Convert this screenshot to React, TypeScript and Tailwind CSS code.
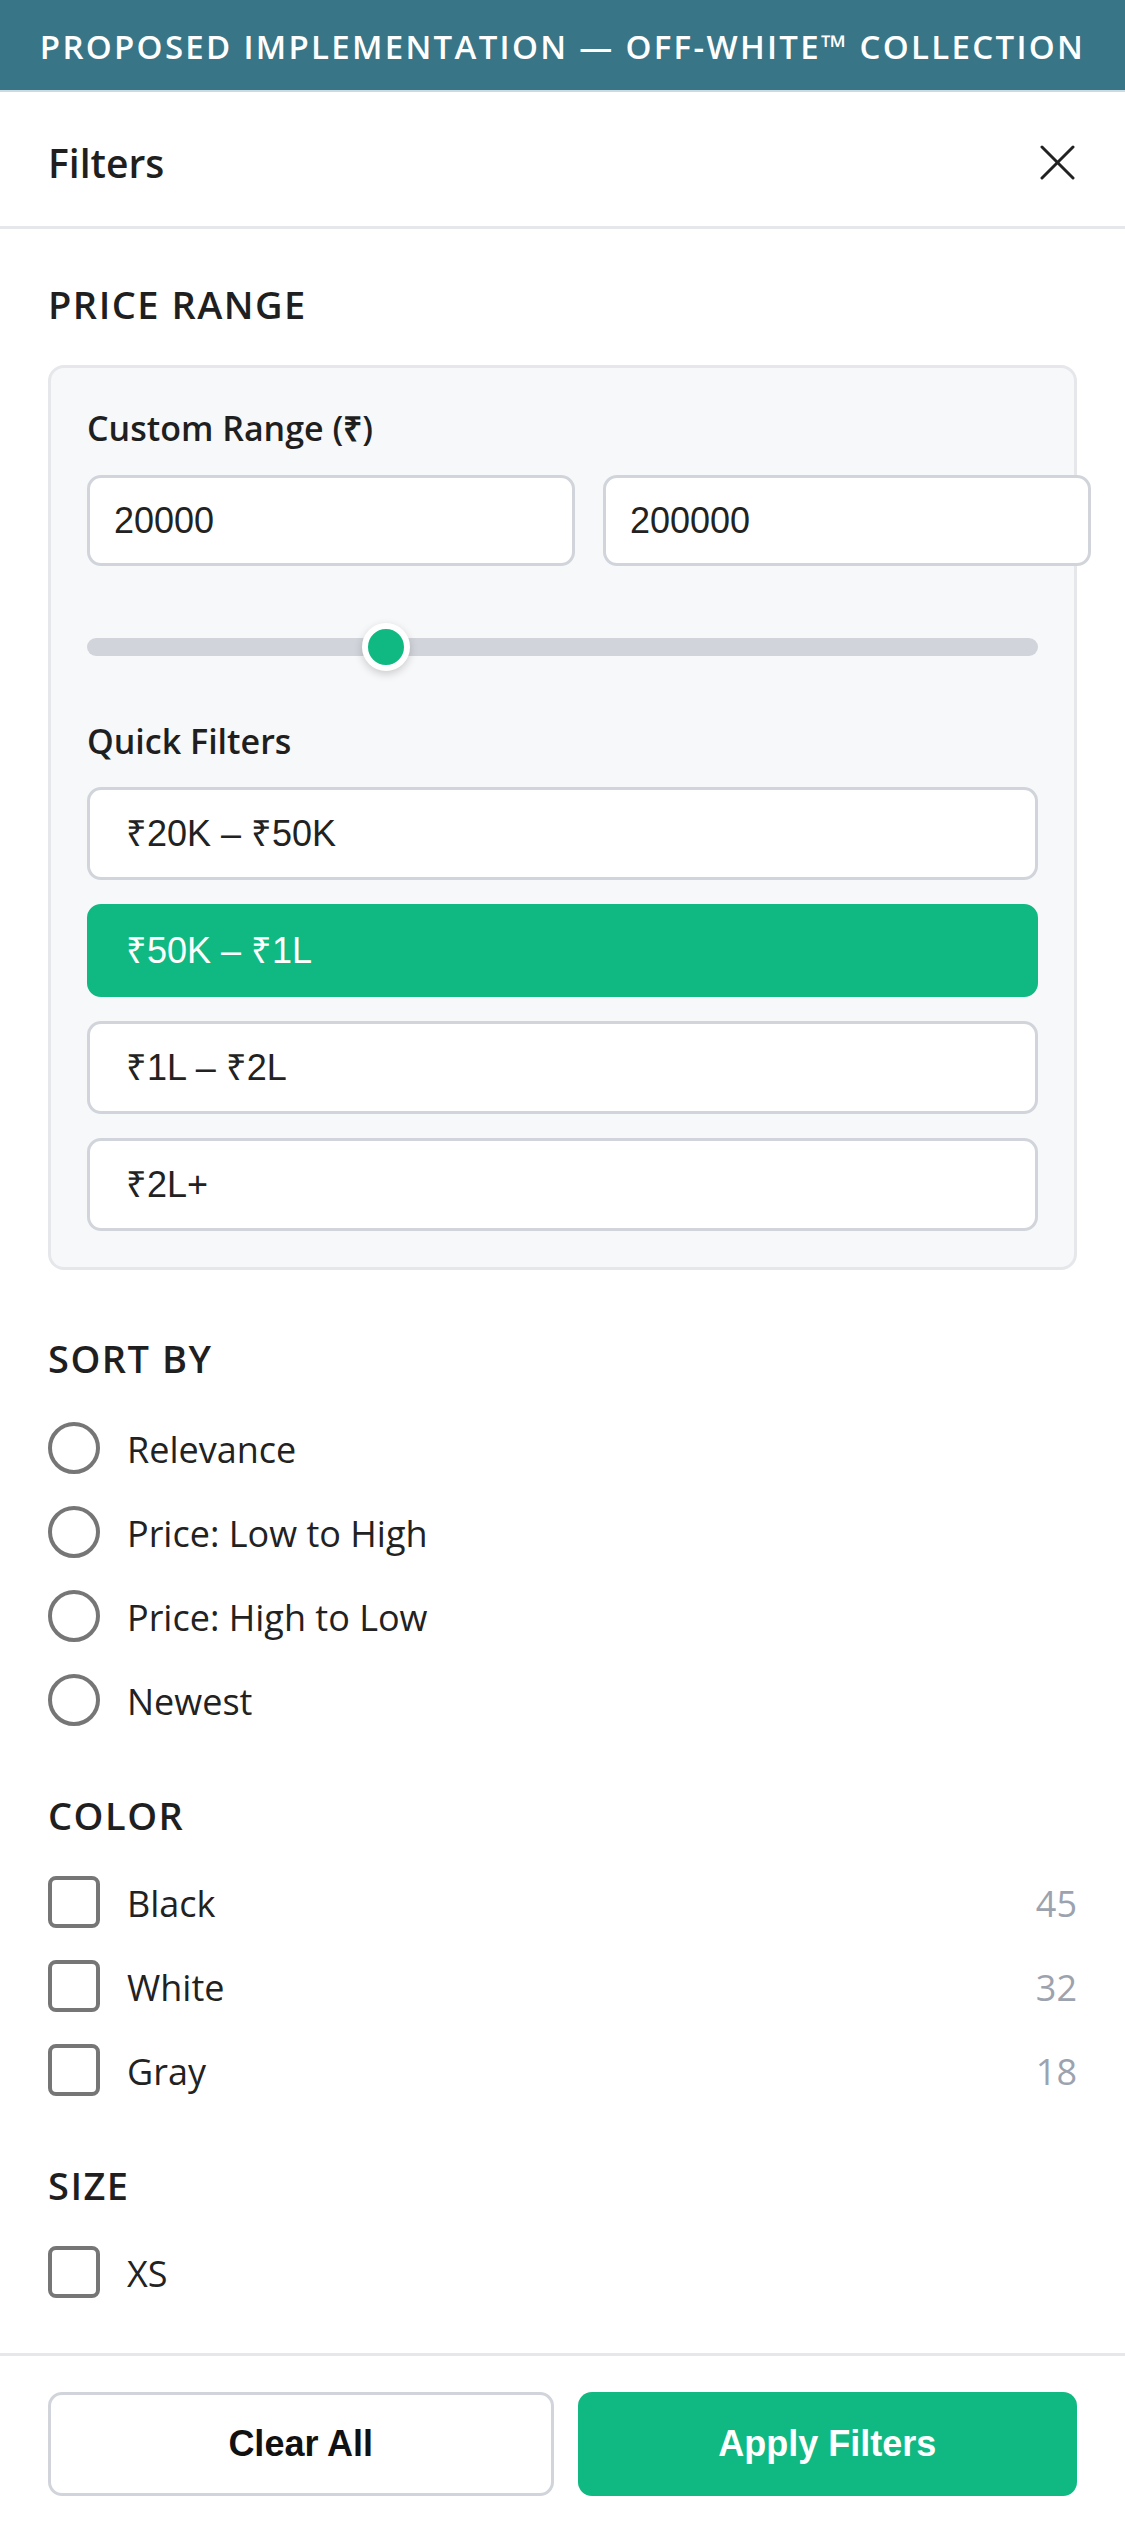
import { useState } from "react";

const quickFilters = ["₹20K – ₹50K", "₹50K – ₹1L", "₹1L – ₹2L", "₹2L+"];
const sortOptions = ["Relevance", "Price: Low to High", "Price: High to Low", "Newest"];
const colorOptions = [
  { name: "Black", count: 45 },
  { name: "White", count: 32 },
  { name: "Gray", count: 18 },
];

function SectionTitle({ children, className }: { children: React.ReactNode; className: string }) {
  return (
    <h3 className={"text-[38px] leading-none font-semibold tracking-[1.5px] text-[#1f1f1f] " + className}>
      {children}
    </h3>
  );
}

function CheckRow({
  label,
  count,
  checked,
  onToggle,
}: {
  label: string;
  count?: number;
  checked: boolean;
  onToggle: () => void;
}) {
  return (
    <button onClick={onToggle} className="flex items-center h-[52px] w-full text-left">
      <span
        className={
          "w-[52px] h-[52px] shrink-0 rounded-[8px] border-[4px] " +
          (checked ? "border-[#10b981] bg-[#10b981]" : "border-[#767676] bg-white")
        }
      ></span>
      <span className="ml-[27px] pt-[3px] text-[36px] leading-none text-[#222]">{label}</span>
      {count !== undefined && (
        <span className="ml-auto pt-[3px] text-[36px] leading-none text-[#9ca3af]">{count}</span>
      )}
    </button>
  );
}

export default function App() {
  const [active, setActive] = useState(1);
  const [sort, setSort] = useState<string | null>(null);
  const [checked, setChecked] = useState<Record<string, boolean>>({});
  const [min, setMin] = useState("20000");
  const [max, setMax] = useState("200000");

  const toggle = (k: string) => setChecked({ ...checked, [k]: !checked[k] });

  return (
    <div className="w-[1125px] h-[2532px] flex flex-col bg-white overflow-hidden font-['Open_Sans',sans-serif]">
      {/* banner */}
      <div className="h-[92px] shrink-0 flex items-center justify-center pt-[3px] bg-[#387587] border-b-[2px] border-[#c9dce2]">
        <p className="text-white text-[33px] font-semibold tracking-[2.3px] leading-none">
          PROPOSED IMPLEMENTATION — OFF-WHITE™ COLLECTION
        </p>
      </div>

      {/* header */}
      <div className="h-[137px] shrink-0 flex items-center justify-between px-[48px] pt-[6px] border-b-[3px] border-[#e5e7eb]">
        <h2 className="text-[39px] font-semibold leading-none text-[#1f1f1f]">Filters</h2>
        <button className="mr-[2px]">
          <svg width="35" height="35" viewBox="0 0 35 35" fill="none" stroke="#222" strokeWidth="3" strokeLinecap="round">
            <path d="M2 2 33 33" />
            <path d="M33 2 2 33" />
          </svg>
        </button>
      </div>

      {/* content */}
      <div className="flex-1 px-[48px]">
        <SectionTitle className="mt-[56px]">PRICE RANGE</SectionTitle>

        <div className="mt-[42px] bg-[#f7f8fa] border-[3px] border-[#e5e7eb] rounded-[16px] p-[36px]">
          <p className="mt-[7px] text-[34px] leading-none font-semibold text-[#1f1f1f]">Custom Range (₹)</p>
          <div className="mt-[30px] flex gap-[28px]">
            <input
              value={min}
              onChange={(e) => setMin(e.target.value)}
              className="w-[488px] h-[91px] shrink-0 bg-white border-[3px] border-[#d1d5db] rounded-[14px] px-[24px] text-[36px] text-[#222] font-['Liberation_Sans',Arial,sans-serif] outline-none"
            />
            <input
              value={max}
              onChange={(e) => setMax(e.target.value)}
              className="w-[488px] h-[91px] shrink-0 bg-white border-[3px] border-[#d1d5db] rounded-[14px] px-[24px] text-[36px] text-[#222] font-['Liberation_Sans',Arial,sans-serif] outline-none"
            />
          </div>

          {/* slider */}
          <div className="relative mt-[57px] h-[48px] flex items-center">
            <div className="w-full h-[18px] rounded-full bg-[#d1d5db]"></div>
            <span className="absolute left-[275px] top-0 w-[48px] h-[48px] rounded-full bg-[#10b981] border-[6px] border-white shadow-[0_3px_8px_rgba(0,0,0,0.18)]"></span>
          </div>

          <p className="mt-[53px] text-[34px] leading-none font-semibold text-[#1f1f1f]">Quick Filters</p>
          <div className="mt-[29px] flex flex-col gap-[24px]">
            {quickFilters.map((q, i) => (
              <button
                key={q}
                onClick={() => setActive(i)}
                className={
                  "h-[93px] rounded-[14px] border-[3px] text-left px-[36px] text-[36px] font-['Liberation_Sans',Arial,sans-serif] " +
                  (active === i ? "bg-[#10b981] border-[#10b981] text-white" : "bg-white border-[#d1d5db] text-[#222]")
                }
              >
                {q}
              </button>
            ))}
          </div>
        </div>

        <SectionTitle className="mt-[69px]">SORT BY</SectionTitle>
        <div className="mt-[45px] flex flex-col gap-[32px]">
          {sortOptions.map((s) => (
            <button key={s} onClick={() => setSort(s)} className="flex items-center h-[52px] text-left">
              <span
                className={
                  "w-[52px] h-[52px] shrink-0 rounded-full border-[4px] bg-white " +
                  (sort === s ? "border-[#10b981]" : "border-[#767676]")
                }
              ></span>
              <span className="ml-[27px] pt-[3px] text-[36px] leading-none text-[#222]">{s}</span>
            </button>
          ))}
        </div>

        <SectionTitle className="mt-[70px]">COLOR</SectionTitle>
        <div className="mt-[42px] flex flex-col gap-[32px]">
          {colorOptions.map((c) => (
            <CheckRow
              key={c.name}
              label={c.name}
              count={c.count}
              checked={!!checked[c.name]}
              onToggle={() => toggle(c.name)}
            />
          ))}
        </div>

        <SectionTitle className="mt-[70px]">SIZE</SectionTitle>
        <div className="mt-[42px] flex flex-col gap-[32px]">
          <CheckRow label="XS" checked={!!checked.XS} onToggle={() => toggle("XS")} />
        </div>
      </div>

      {/* footer */}
      <div className="shrink-0 border-t-[3px] border-[#e5e7eb] px-[48px] py-[36px] flex gap-[24px] bg-white">
        <button className="flex-1 h-[104px] rounded-[14px] border-[3px] border-[#d1d5db] bg-white text-[36px] font-bold text-[#111] font-['Liberation_Sans',Arial,sans-serif]">
          Clear All
        </button>
        <button className="flex-1 h-[104px] rounded-[14px] bg-[#10b981] text-[36px] font-bold text-white font-['Liberation_Sans',Arial,sans-serif]">
          Apply Filters
        </button>
      </div>
    </div>
  );
}
